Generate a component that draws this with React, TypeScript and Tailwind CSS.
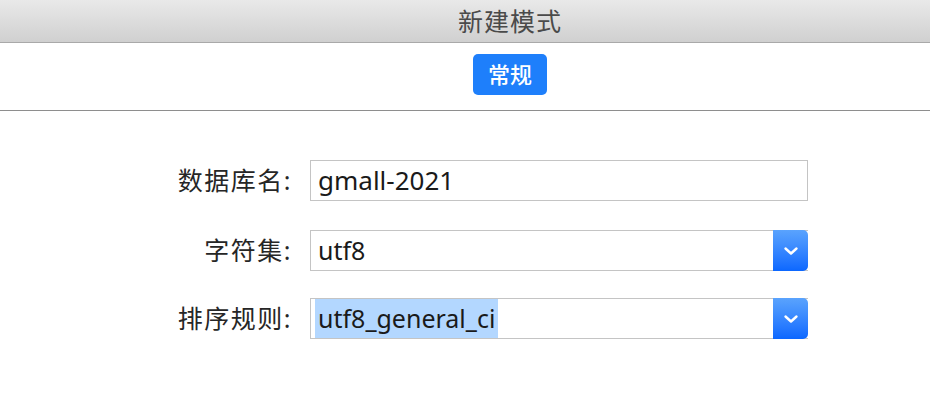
import React from 'react';

const CJK = "font-['Noto_Sans','Noto_Sans_CJK_SC',sans-serif]";

const Chevron: React.FC = () => (
  <svg width="16" height="10" viewBox="0 0 16 10" fill="none">
    <path d="M2.5 2.5l5.5 5 5.5-5" stroke="white" strokeWidth="2.4" strokeLinecap="round" strokeLinejoin="round" />
  </svg>
);

const SelectBox: React.FC<{ value: string; selected?: boolean }> = ({ value, selected }) => (
  <div className="flex h-[41px] w-[498px] border border-[#c4c4c4] border-r-0 bg-white">
    <div className="flex flex-1 items-stretch pl-[4px]">
      <span
        className={`flex items-center px-[3px] text-[25px] text-[#1a1a1a] ${selected ? 'bg-[#b3d7ff]' : ''}`}
      >
        {value}
      </span>
    </div>
    <div className="-my-px flex w-[35px] items-center justify-center rounded-r-[5px] bg-gradient-to-b from-[#5aa3fd] to-[#0b67ff]">
      <Chevron />
    </div>
  </div>
);

const App: React.FC = () => {
  return (
    <div className={`h-[400px] w-[930px] overflow-hidden bg-white ${CJK}`}>
      {/* barra de título */}
      <div className="flex h-[43px] items-center justify-center border-b border-[#a9a9a9] bg-gradient-to-b from-[#e9e9e9] to-[#d0d0d0] pl-[90px]">
        <span className="text-[25px] leading-none tracking-[1px] text-[#4a4a4a]">新建模式</span>
      </div>

      {/* pestañas */}
      <div className="flex h-[68px] justify-center border-b border-[#8e8e8e] pl-[90px] pt-[11px]">
        <div className="flex h-[41px] w-[74px] items-center justify-center rounded-[5px] bg-[#1e7ffb] text-[22px] font-medium text-white">
          常规
        </div>
      </div>

      {/* formulario */}
      <div className="grid grid-cols-[292px_498px] items-center gap-x-[18px] gap-y-[29px] pt-[49px]">
        <div className="text-right text-[25px] tracking-[1.5px] text-[#262626]">数据库名:</div>
        <div className="flex h-[41px] items-center border border-[#c4c4c4] pl-[7px] text-[26px] text-[#1a1a1a]">
          gmall-2021
        </div>

        <div className="text-right text-[25px] tracking-[1.5px] text-[#262626]">字符集:</div>
        <SelectBox value="utf8" />

        <div className="-mt-[2px] text-right text-[25px] tracking-[1.5px] text-[#262626]">排序规则:</div>
        <div className="-mt-[2px]">
          <SelectBox value="utf8_general_ci" selected />
        </div>
      </div>
    </div>
  );
};

export default App;
